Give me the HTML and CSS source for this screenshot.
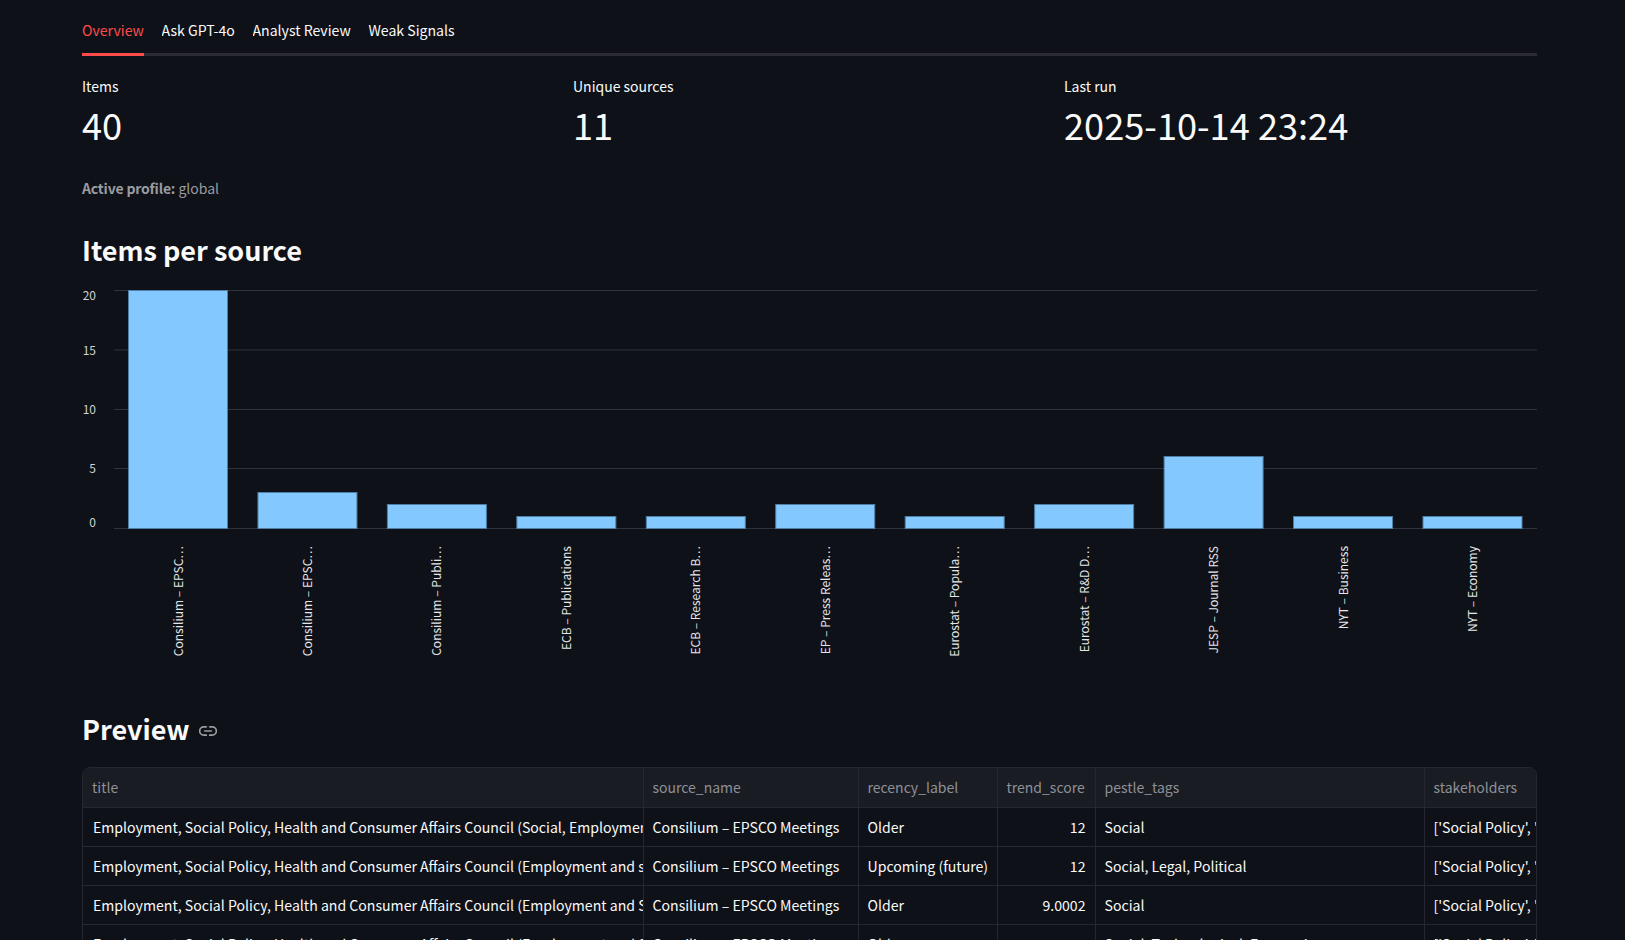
FILE: index.html
```html
<!DOCTYPE html>
<html>
<head>
<meta charset="UTF-8" />
<title>Overview</title>
<link rel="stylesheet" href="styles.css">
</head>
<body>
<main class="page">

<nav class="tabs">
  <a class="tab active">Overview</a>
  <a class="tab">Ask GPT-4o</a>
  <a class="tab">Analyst Review</a>
  <a class="tab">Weak Signals</a>
</nav>

<section class="metrics">
  <div class="metric">
    <div class="metric-label">Items</div>
    <div class="metric-value">40</div>
  </div>
  <div class="metric">
    <div class="metric-label">Unique sources</div>
    <div class="metric-value">11</div>
  </div>
  <div class="metric">
    <div class="metric-label">Last run</div>
    <div class="metric-value">2025-10-14 23:24</div>
  </div>
</section>

<p class="caption"><strong>Active profile:</strong> global</p>

<h2 class="heading chart-heading">Items per source</h2>

<svg class="chart" width="1455" height="390" viewBox="82 285 1455 390">
  <g class="grid">
    <line x1="114" x2="1537" y1="290.5" y2="290.5" />
    <line x1="114" x2="1537" y1="350" y2="350" />
    <line x1="114" x2="1537" y1="409.5" y2="409.5" />
    <line x1="114" x2="1537" y1="468.5" y2="468.5" />
    <line x1="114" x2="1537" y1="528.5" y2="528.5" />
  </g>
  <g class="y-labels">
    <text x="96" y="300">20</text>
    <text x="96" y="355">15</text>
    <text x="96" y="414">10</text>
    <text x="96" y="473">5</text>
    <text x="96" y="527">0</text>
  </g>
  <g class="bars">
    <rect x="128.5" y="290.5" width="99" height="238" />
    <rect x="257.95" y="492.5" width="99" height="36" />
    <rect x="387.4" y="504.5" width="99" height="24" />
    <rect x="516.85" y="516.5" width="99" height="12" />
    <rect x="646.3" y="516.5" width="99" height="12" />
    <rect x="775.75" y="504.5" width="99" height="24" />
    <rect x="905.2" y="516.5" width="99" height="12" />
    <rect x="1034.65" y="504.5" width="99" height="24" />
    <rect x="1164.1" y="456.5" width="99" height="72" />
    <rect x="1293.55" y="516.5" width="99" height="12" />
    <rect x="1423" y="516.5" width="99" height="12" />
  </g>
  <g class="x-labels">
    <text transform="translate(183 546) rotate(-90)">Consilium – EPSC…</text>
    <text transform="translate(312 546) rotate(-90)">Consilium – EPSC…</text>
    <text transform="translate(441 546) rotate(-90)">Consilium – Publi…</text>
    <text transform="translate(571 546) rotate(-90)">ECB – Publications</text>
    <text transform="translate(700 546) rotate(-90)">ECB – Research B…</text>
    <text transform="translate(830 546) rotate(-90)">EP – Press Releas…</text>
    <text transform="translate(959 546) rotate(-90)">Eurostat – Popula…</text>
    <text transform="translate(1089 546) rotate(-90)">Eurostat – R&amp;D D…</text>
    <text transform="translate(1218 546) rotate(-90)">JESP – Journal RSS</text>
    <text transform="translate(1347.5 546) rotate(-90)">NYT – Business</text>
    <text transform="translate(1477 546) rotate(-90)">NYT – Economy</text>
  </g>
</svg>

<h2 class="heading preview-heading">Preview
  <svg class="anchor" width="20" height="20" viewBox="0 0 24 24" fill="none" stroke="currentColor" stroke-width="2" stroke-linecap="round" stroke-linejoin="round">
    <path d="M10 7H7a5 5 0 0 0 0 10h3" />
    <path d="M14 7h3a5 5 0 0 1 0 10h-3" />
    <path d="M8 12h8" />
  </svg>
</h2>

<div class="table-wrap">
  <table class="data">
    <colgroup>
      <col class="c-title"><col class="c-source"><col class="c-recency"><col class="c-score"><col class="c-tags"><col class="c-stake">
    </colgroup>
    <thead>
      <tr>
        <th>title</th><th>source_name</th><th>recency_label</th><th>trend_score</th><th>pestle_tags</th><th>stakeholders</th>
      </tr>
    </thead>
    <tbody>
      <tr>
        <td>Employment, Social Policy, Health and Consumer Affairs Council (Social, Employment)</td>
        <td>Consilium – EPSCO Meetings</td><td>Older</td><td class="num">12</td><td>Social</td><td>['Social Policy', 'Employment']</td>
      </tr>
      <tr>
        <td>Employment, Social Policy, Health and Consumer Affairs Council (Employment and social)</td>
        <td>Consilium – EPSCO Meetings</td><td>Upcoming (future)</td><td class="num">12</td><td>Social, Legal, Political</td><td>['Social Policy', 'Employment']</td>
      </tr>
      <tr>
        <td>Employment, Social Policy, Health and Consumer Affairs Council (Employment and Social)</td>
        <td>Consilium – EPSCO Meetings</td><td>Older</td><td class="num">9.0002</td><td>Social</td><td>['Social Policy', 'Employment']</td>
      </tr>
      <tr>
        <td>Employment, Social Policy, Health and Consumer Affairs Council (Employment and Social)</td>
        <td>Consilium – EPSCO Meetings</td><td>Older</td><td class="num">9</td><td>Social, Technological, Economic</td><td>['Social Policy', 'Employment']</td>
      </tr>
    </tbody>
  </table>
</div>

</main>
</body>
</html>
```

FILE: styles.css
```css
html, body {
    height: 100%;
    margin: 0;
    overflow: hidden;
}

body {
    background: #0e1117;
    color: #fafafa;
    font-family: "Noto Sans CJK SC", "Source Sans Pro", sans-serif;
    font-size: 14px;
}

.page {
    padding: 0 88px 0 82px;
}

.tabs {
    display: flex;
    gap: 17.7px;
    height: 53px;
    border-bottom: 3px solid #2a2b33;
}

.tab {
    font-size: 14.1px;
    line-height: 61px;
    height: 56px;
    color: #fafafa;
    overflow: hidden;
}

.tab.active {
    color: #ff4b4b;
    border-bottom: 3px solid #ff4b4b;
    box-sizing: border-box;
}

.metrics {
    display: grid;
    grid-template-columns: repeat(3, 1fr);
    column-gap: 18px;
    margin-top: 20px;
}

.metric-label {
    line-height: 20px;
}

.metric-value {
    font-size: 36.2px;
    line-height: 56px;
}

.caption {
    margin: 26px 0 0;
    line-height: 20px;
    color: #9a9ca1;
}

.caption strong {
    letter-spacing: -0.17px;
}

.heading {
    margin: 0;
    font-size: 27px;
    font-weight: 600;
    line-height: 40px;
}

.chart-heading {
    margin-top: 32px;
}

.chart {
    display: block;
    margin-top: 15px;
}

.grid line {
    stroke: #31333c;
    stroke-width: 1;
}

.y-labels text {
    fill: #d0d1d4;
    font-size: 12px;
    text-anchor: end;
}

.bars rect {
    fill: #83c9ff;
    stroke: #4f7fa5;
    stroke-width: 1;
}

.x-labels text {
    fill: #e6e6e8;
    font-size: 12px;
    text-anchor: end;
}

.preview-heading {
    display: flex;
    align-items: center;
    gap: 8px;
    margin-top: 34px;
}

.anchor {
    color: #9a9ca1;
    margin-top: 4px;
}

.table-wrap {
    margin-top: 18px;
    border: 1px solid #262730;
    border-radius: 8px;
    overflow: hidden;
}

.data {
    width: 100%;
    border-collapse: collapse;
    table-layout: fixed;
}

.c-title { width: 560px; }
.c-source { width: 215px; }
.c-recency { width: 139px; }
.c-score { width: 98px; }
.c-tags { width: 329px; }

.data th, .data td {
    height: 39px;
    padding: 0 8px 0 9px;
    box-sizing: border-box;
    border: 1px solid #262730;
    white-space: nowrap;
    overflow: hidden;
    text-align: left;
    font-weight: 400;
    line-height: 20px;
}

.data td {
    font-size: 14.1px;
}

.data th {
    background: #1a1c24;
    color: #8e9096;
}

.data tr > :first-child { border-left: 0; }
.data td:first-child { padding-left: 10px; }
.data tr > :last-child { border-right: 0; }
.data thead th { border-top: 0; }

.data td.num {
    text-align: right;
    padding-right: 9px;
}
```
